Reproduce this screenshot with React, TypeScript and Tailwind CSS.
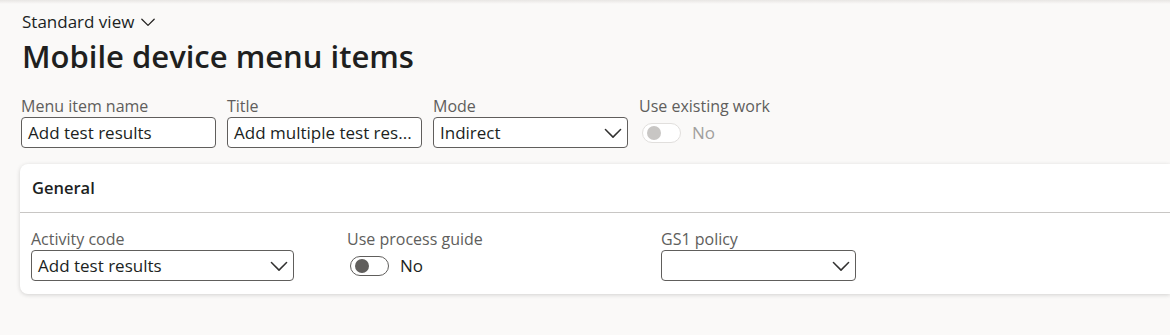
import React from 'react';

const font = { fontFamily: '"Open Sans", "Noto Sans", sans-serif' };

const Chevron: React.FC<{ className?: string }> = ({ className }) => (
  <svg viewBox="0 0 16 16" className={className} fill="none">
    <path d="M2.5 5.5 8 11l5.5-5.5" stroke="currentColor" strokeWidth="1.1" strokeLinecap="round" strokeLinejoin="round" />
  </svg>
);

const Field: React.FC<{ label: string; children: React.ReactNode; width?: string }> = ({
  label,
  children,
  width = 'w-[195px]',
}) => (
  <div className={`flex flex-col ${width}`}>
    <label className="text-[16px] leading-[22px] text-[#605e5c] whitespace-nowrap">{label}</label>
    <div>{children}</div>
  </div>
);

const TextBox: React.FC<{ value: string }> = ({ value }) => (
  <div className="h-[31px] w-full rounded-[4px] border border-[#605e5c] bg-white px-[6px] flex items-center text-[17px] text-[#201f1e] whitespace-nowrap overflow-hidden">
    {value}
  </div>
);

const Select: React.FC<{ value: string }> = ({ value }) => (
  <div className="h-[31px] w-full rounded-[4px] border border-[#605e5c] bg-white pl-[6px] pr-[3px] flex items-center justify-between text-[17px] text-[#201f1e]">
    <span>{value}</span>
    <Chevron className="w-[22px] h-[22px] text-[#323130]" />
  </div>
);

const Toggle: React.FC<{ disabled?: boolean }> = ({ disabled }) => (
  <div className="flex items-center h-[31px] gap-[11px] pl-[3px]">
    <div
      className={`w-[39px] h-[20px] rounded-full border flex items-center px-[4px] ${
        disabled ? 'border-[#e1dfdd] bg-white' : 'border-[#605e5c] bg-white'
      }`}
    >
      <div className={`w-[14px] h-[14px] rounded-full ${disabled ? 'bg-[#c8c6c4]' : 'bg-[#605e5c]'}`} />
    </div>
    <span className={`text-[17px] ${disabled ? 'text-[#a19f9d]' : 'text-[#201f1e]'}`}>No</span>
  </div>
);

export default function App() {
  return (
    <div className="min-h-[335px] bg-[#faf9f8] overflow-hidden" style={font}>
      <div className="h-[4px] bg-gradient-to-b from-[#e8e6e4] to-[#faf9f8]" />
      <div className="pl-[22px] pt-[6px]">
        <button className="flex items-center gap-[5px] text-[17px] text-[#201f1e] leading-[24px]">
          Standard view
          <Chevron className="w-[18px] h-[18px]" />
        </button>
        <h1 className="text-[31px] font-semibold text-[#201f1e] leading-[40px] mt-[2px]">
          Mobile device menu items
        </h1>
      </div>

      <div className="flex gap-[11px] pl-[21px] mt-[19px]">
        <Field label="Menu item name">
          <TextBox value="Add test results" />
        </Field>
        <Field label="Title">
          <TextBox value="Add multiple test res..." />
        </Field>
        <Field label="Mode">
          <Select value="Indirect" />
        </Field>
        <Field label="Use existing work">
          <Toggle disabled />
        </Field>
      </div>

      <div className="ml-[20px] mt-[16px] bg-white rounded-l-[8px] shadow-[0_1px_4px_rgba(0,0,0,0.16)]">
        <div className="h-[49px] px-[12px] flex items-center border-b border-[#c8c6c4]">
          <h2 className="text-[16.5px] font-semibold text-[#201f1e]">General</h2>
        </div>
        <div className="flex pl-[11px] pt-[15px] pb-[13px]">
          <Field label="Activity code" width="w-[263px]">
            <Select value="Add test results" />
          </Field>
          <div className="ml-[53px]">
            <Field label="Use process guide" width="w-[260px]">
              <Toggle />
            </Field>
          </div>
          <div className="ml-[54px]">
            <Field label="GS1 policy">
              <Select value="" />
            </Field>
          </div>
        </div>
      </div>
    </div>
  );
}
